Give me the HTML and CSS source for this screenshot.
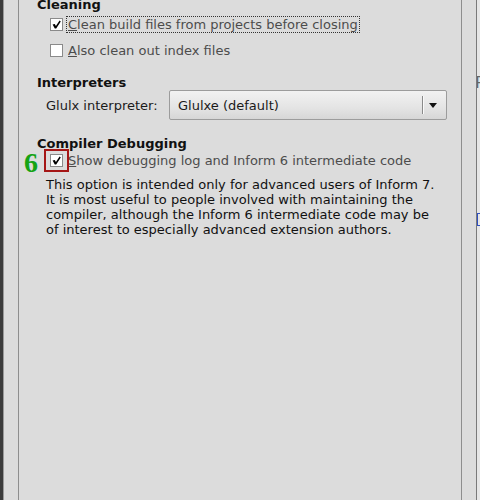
FILE: index.html
```html
<!DOCTYPE html>
<html>
<head>
<meta charset="utf-8">
<link rel="stylesheet" href="styles.css">
</head>
<body>
<div class="frame">
  <div class="left-edge"><div class="dark"></div><div class="gap"></div></div>
  <div class="panel">
    <div class="section first">
      <div class="heading">Cleaning</div>
      <div class="row">
        <span class="check on"><svg width="11" height="11" viewBox="0 0 11 11"><path d="M1.6 5.6 L3.8 4.9 L4.9 6.9 L8.6 1.6 L9.8 2.6 L5.2 9.6 L3.8 9.6 Z" fill="#000"/></svg></span>
        <span class="label focus"><u>C</u>lean build files from projects before closing</span>
      </div>
      <div class="row">
        <span class="check"></span>
        <span class="label"><u>A</u>lso clean out index files</span>
      </div>
    </div>
    <div class="section second">
      <div class="heading">Interpreters</div>
      <div class="combo-row">
        <span class="combo-label">Glulx interpreter:</span>
        <div class="combo">
          <span class="combo-text">Glulxe (default)</span>
          <span class="combo-sep"></span>
          <span class="combo-arrow"></span>
        </div>
      </div>
    </div>
    <div class="section third">
      <div class="heading">Compiler Debugging</div>
      <div class="row marked">
        <span class="callout-num">6</span>
        <span class="callout-box"></span>
        <span class="check on"><svg width="11" height="11" viewBox="0 0 11 11"><path d="M1.6 5.6 L3.8 4.9 L4.9 6.9 L8.6 1.6 L9.8 2.6 L5.2 9.6 L3.8 9.6 Z" fill="#000"/></svg></span>
        <span class="label"><u>S</u>how debugging log and Inform 6 intermediate code</span>
      </div>
      <p class="note">This option is intended only for advanced users of Inform 7.<br>It is most useful to people involved with maintaining the<br>compiler, although the Inform 6 intermediate code may be<br>of interest to especially advanced extension authors.</p>
    </div>
  </div>
  <div class="right-edge">
    <div class="gap"></div>
    <div class="line"></div>
    <div class="peek"><span class="peek-p">P</span><span class="peek-link"></span></div>
  </div>
</div>
</body>
</html>
```

FILE: styles.css
```css
html, body {
  margin: 0;
  padding: 0;
  background: #dcdcdc;
  width: 480px;
  height: 500px;
  overflow: hidden;
}
.frame {
  display: flex;
  width: 480px;
  height: 500px;
  font-family: "DejaVu Sans", "Liberation Sans", sans-serif;
  font-size: 12px;
  color: #1a1a1a;
}
.left-edge {
  display: flex;
  width: 18px;
  flex: none;
  border-right: 1px solid #8e8e8e;
}
.left-edge .dark {
  width: 3px;
  background: #3c3c3c;
  border-right: 1px solid #9a9a9a;
}
.left-edge .gap {
  flex: 1;
  background: #dcdcdc;
}
.panel {
  flex: 1;
  padding-left: 18px;
  border-right: 1px solid #8e8e8e;
  overflow: hidden;
}
.section.first { margin-top: -3px; }
.section.second { margin-top: 14px; }
.section.third { margin-top: 16px; }
.heading {
  font-weight: bold;
  font-size: 13px;
  line-height: 16px;
  height: 16px;
  color: #111;
}
.row {
  display: flex;
  align-items: center;
  height: 22px;
  padding-left: 13px;
  position: relative;
}
.section.first .row + .row { margin-top: 4px; }
.check {
  width: 11px;
  height: 11px;
  border: 1px solid #8a8a8a;
  background: #fff;
  flex: none;
  display: block;
}
.check svg { display: block; }
.label {
  margin-left: 5px;
  color: #4c4c4c;
  font-size: 13px;
  line-height: 15px;
  white-space: nowrap;
}
.label.focus {
  outline: 1px dotted #333;
  outline-offset: 0px;
  padding: 0 1px;
  margin-left: 4px;
}
.combo-row {
  display: flex;
  align-items: center;
  height: 30px;
  margin-top: -1px;
  padding-left: 9px;
  padding-right: 14px;
}
.combo-label {
  font-size: 13px;
  width: 123px;
  flex: none;
  color: #1a1a1a;
}
.combo {
  flex: 1;
  height: 28px;
  border: 1px solid #9c9c9c;
  border-radius: 2px;
  background: linear-gradient(#f2f2f2, #e4e4e4 60%, #d6d6d6);
  display: flex;
  align-items: center;
  padding-left: 8px;
}
.combo-text {
  flex: 1;
  font-size: 13px;
  color: #1a1a1a;
}
.combo-sep {
  width: 1px;
  height: 18px;
  background: #8a8a8a;
  border-right: 1px solid #fafafa;
}
.combo-arrow {
  width: 0;
  height: 0;
  border-left: 4px solid transparent;
  border-right: 4px solid transparent;
  border-top: 5px solid #111;
  margin: 0 9px 0 5px;
}
.marked { margin-top: -3px; }
.callout-num {
  position: absolute;
  left: -13px;
  top: 1px;
  font-family: "Liberation Serif", "DejaVu Serif", serif;
  font-weight: bold;
  font-size: 28px;
  line-height: 26px;
  color: #15a315;
}
.callout-box {
  position: absolute;
  left: 7px;
  top: 0px;
  width: 21px;
  height: 19px;
  border: 2px solid #a51616;
}
.note {
  margin: 6px 0 0 9px;
  font-size: 13px;
  line-height: 15px;
  color: #111;
  white-space: nowrap;
}
.right-edge {
  display: flex;
  width: 18px;
  flex: none;
}
.right-edge .gap { width: 14px; }
.right-edge .line {
  width: 1px;
  background: #7a7a7a;
}
.right-edge .peek {
  flex: 1;
  background: #e6e6e6;
  position: relative;
  overflow: hidden;
}
.peek-p {
  position: absolute;
  left: -2px;
  top: 73px;
  font-size: 16px;
  color: #666;
}
.peek-link {
  position: absolute;
  left: 0;
  top: 213px;
  width: 3px;
  height: 11px;
  border: 1px solid #3050c0;
  border-right: none;
}
```
